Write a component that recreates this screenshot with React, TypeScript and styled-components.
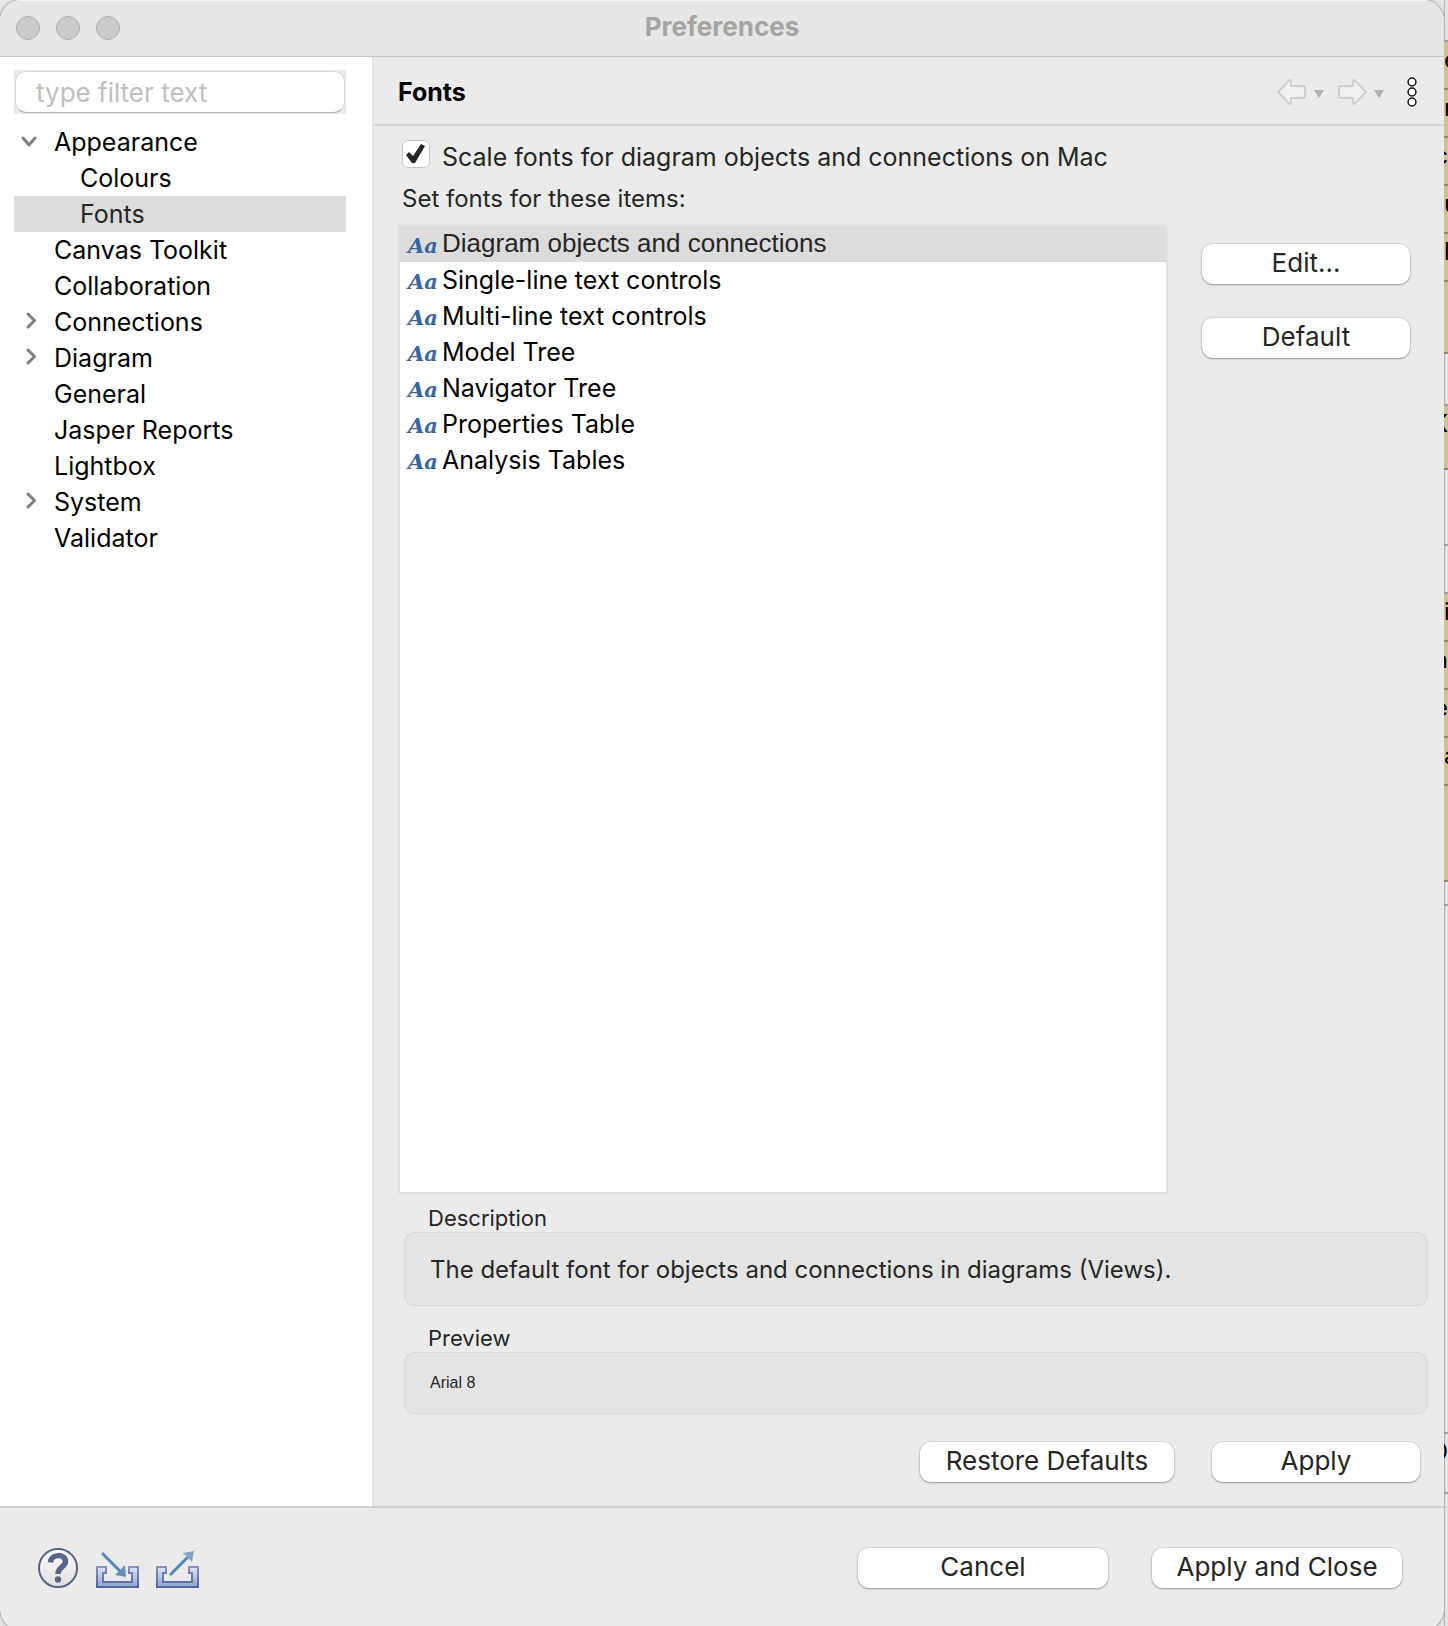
import React, { useState } from "react";
import styled, { createGlobalStyle } from "styled-components";

const sans = `Inter, "Liberation Sans", sans-serif`;
const arial = `"Liberation Sans", Arial, sans-serif`;

const GlobalStyle = createGlobalStyle`
  *, *::before, *::after { box-sizing: border-box; }
  body { margin: 0; font-family: ${sans}; background: #ebebeb; color: #262626; }
  button, input { font: inherit; color: inherit; }
  ul, h1, h2, h3, p { margin: 0; padding: 0; font-weight: inherit; font-size: inherit; }
  ul { list-style: none; }
`;

const Desktop = styled.div`
  display: grid;
  grid-template-columns: minmax(0, 1fr) 4px;
  height: 100vh;
  min-height: 900px;
  overflow: hidden;
  background: #ededed;
`;

const Dialog = styled.main`
  display: flex;
  flex-direction: column;
  margin-bottom: -6px;
  border-radius: 21px 21px 24px 24px;
  overflow: hidden;
  background: #ebebeb;
  box-shadow: 0 0 0 1px #b4b4b4, 0 0 8px rgba(0, 0, 0, 0.25);
`;

const TitleBar = styled.header`
  display: grid;
  grid-template-columns: 1fr auto 1fr;
  align-items: center;
  height: 57px;
  padding: 0 16px;
  background: #e6e6e4;
  border-bottom: 1px solid #c6c6c6;
  box-shadow: inset 0 1px #f6f6f6;
`;

const Lights = styled.div`
  display: flex;
  gap: 16px;
`;

const Light = styled.button`
  width: 24px;
  height: 24px;
  padding: 0;
  border: 1px solid #adadac;
  border-radius: 50%;
  background: #cbcbca;
`;

const Title = styled.h1`
  font-size: 26px;
  line-height: 36px;
  font-weight: 700;
  color: #a5a5a4;
  padding-bottom: 2px;
`;

const Body = styled.div`
  display: grid;
  grid-template-columns: 374px minmax(0, 1fr);
  flex: 1;
  min-height: 0;
`;

const Sidebar = styled.nav`
  padding: 13px 26px 0 14px;
  background: #fff;
  border-right: 2px solid #e5e5e5;
`;

const FilterFrame = styled.label`
  display: block;
  height: 44px;
  padding: 1px;
  background: #ebebeb;
`;

const Filter = styled.input`
  display: block;
  width: 100%;
  height: 42px;
  padding: 1px 20px 0;
  border: 1px solid #dadada;
  border-bottom-color: #b0b0b0;
  border-radius: 11px;
  background: #fff;
  font-size: 26px;
  outline: none;
  &::placeholder { color: #c0c0c0; opacity: 1; }
`;

const Tree = styled.ul`
  margin-top: 10px;
`;

const TreeRow = styled.li<{ $child?: boolean; $selected?: boolean }>`
  display: flex;
  align-items: center;
  height: 36px;
  padding-left: ${(p) => (p.$child ? "32px" : "6px")};
  background: ${(p) => (p.$selected ? "#dcdcdc" : "transparent")};
  color: ${(p) => (p.$selected ? "#262626" : "#000")};
  font-size: 25px;
  line-height: 36px;
  cursor: default;
`;

const Twisty = styled.span`
  display: flex;
  width: 34px;
  flex: none;
  svg { display: block; }
`;

const Page = styled.section`
  display: flex;
  flex-direction: column;
  min-width: 0;
`;

const PageHeader = styled.header`
  display: flex;
  align-items: center;
  justify-content: space-between;
  height: 69px;
  padding: 2px 27px 0 24px;
  border-bottom: 2px solid #d4d4d4;
`;

const PageTitle = styled.h2`
  font-size: 25px;
  line-height: 36px;
  font-weight: 700;
  color: #000;
`;

const Toolbar = styled.div`
  display: flex;
  align-items: center;
`;

const ToolButton = styled.button<{ $gap?: number }>`
  display: flex;
  padding: 0;
  margin-left: ${(p) => p.$gap ?? 0}px;
  border: 0;
  background: none;
`;

const PageContent = styled.div`
  display: flex;
  flex-direction: column;
  flex: 1;
  min-height: 0;
  padding: 13px 16px 24px 24px;
`;

const CheckRow = styled.label`
  display: flex;
  align-items: flex-start;
  gap: 12px;
  padding-left: 4px;
  font-size: 25px;
  line-height: 36px;
`;

const Check = styled.input`
  appearance: none;
  width: 28px;
  height: 28px;
  margin: 1px 0 0;
  border: 1px solid #c4c4c4;
  border-radius: 6px;
  background: #fff;
  display: grid;
  place-items: center;
  &:checked::before {
    content: "";
    width: 20px;
    height: 20px;
    background: #262626;
    clip-path: path("M0 11 L3 8 L7 12 L15 0 L19 2 L9 19 L6 19 Z");
  }
`;

const ListCaption = styled.p`
  margin: 10px 0 11px;
  padding-left: 4px;
  font-size: 24px;
  line-height: 28px;
`;

const Split = styled.div`
  display: grid;
  grid-template-columns: minmax(0, 1fr) 208px;
  gap: 34px;
  flex: 1;
  min-height: 0;
  padding-right: 18px;
`;

const FontList = styled.ul`
  border: 2px solid #e2e2e2;
  background: #fff;
`;

const FontRow = styled.li<{ $selected?: boolean }>`
  display: flex;
  gap: 4px;
  height: 36px;
  padding-left: 8px;
  background: ${(p) => (p.$selected ? "#dcdcdc" : "transparent")};
  color: ${(p) => (p.$selected ? "#262626" : "#000")};
  font-family: ${(p) => (p.$selected ? arial : sans)};
  font-size: ${(p) => (p.$selected ? 26 : 25)}px;
  line-height: ${(p) => (p.$selected ? 34 : 36)}px;
  cursor: default;
`;

const FontMark = styled.span`
  width: 30px;
  flex: none;
  color: #3a659e;
  font-family: "DejaVu Serif", "Liberation Serif", serif;
  font-size: 21px;
  line-height: 40px;
  font-weight: 700;
  font-style: italic;
`;

const SideButtons = styled.div`
  display: flex;
  flex-direction: column;
  gap: 34px;
  padding-top: 20px;
`;

const PushButton = styled.button<{ $width?: number }>`
  width: ${(p) => (p.$width ? `${p.$width}px` : "auto")};
  height: 40px;
  padding: 0 0 2px;
  border: 0;
  border-radius: 11px;
  background: #fff;
  box-shadow: 0 0 1px 1px rgba(0, 0, 0, 0.08), 0 1px 2px rgba(0, 0, 0, 0.3);
  font-size: 26px;
  line-height: 36px;
`;

const Group = styled.section`
  padding-left: 6px;
  & + & { margin-top: 8px; }
`;

const GroupTitle = styled.h3`
  padding: 10px 0 0 24px;
  font-size: 22px;
  line-height: 28px;
`;

const GroupBox = styled.div<{ $height: number }>`
  display: flex;
  align-items: center;
  height: ${(p) => p.$height}px;
  padding-left: 25px;
  border: 1px solid #dadada;
  border-radius: 10px;
  background: #e4e4e4;
`;

const DescriptionText = styled.p`
  padding-top: 1px;
  font-size: 24px;
  line-height: 28px;
`;

const PreviewText = styled.p`
  font-family: ${arial};
  font-size: 16px;
  line-height: 20px;
`;

const PageActions = styled.div`
  display: flex;
  justify-content: flex-end;
  gap: 38px;
  margin-top: 28px;
  padding-right: 8px;
`;

const Footer = styled.footer`
  display: flex;
  justify-content: space-between;
  align-items: center;
  height: 126px;
  padding: 0 42px 4px 38px;
  border-top: 2px solid #d2d2d2;
`;

const FooterTools = styled.div`
  display: flex;
  gap: 17px;
`;

const FooterActions = styled.div`
  display: flex;
  gap: 44px;
`;

const Behind = styled.aside`
  display: flex;
  flex-direction: column;
  overflow: hidden;
  background: #e3e3e3;
  box-shadow: inset 1px 0 #b0b0b0;
`;

const BehindCell = styled.div<{ $height: number; $tan?: boolean; $side?: "end" }>`
  display: flex;
  flex: none;
  align-items: flex-start;
  justify-content: ${(p) => (p.$side === "end" ? "flex-end" : "flex-start")};
  height: ${(p) => p.$height}px;
  padding-top: 3px;
  overflow: hidden;
  color: #000;
  background: ${(p) => (p.$tan ? "#d3c091" : "transparent")};
  border-bottom: 2px solid ${(p) => (p.$tan ? "#988a66" : "#a2a2a2")};
  font-size: 24px;
  line-height: 30px;
`;

const treeItems: { label: string; child?: boolean; state?: "open" | "closed" }[] = [
  { label: "Appearance", state: "open" },
  { label: "Colours", child: true },
  { label: "Fonts", child: true },
  { label: "Canvas Toolkit" },
  { label: "Collaboration" },
  { label: "Connections", state: "closed" },
  { label: "Diagram", state: "closed" },
  { label: "General" },
  { label: "Jasper Reports" },
  { label: "Lightbox" },
  { label: "System", state: "closed" },
  { label: "Validator" },
];

const fontItems = [
  "Diagram objects and connections",
  "Single-line text controls",
  "Multi-line text controls",
  "Model Tree",
  "Navigator Tree",
  "Properties Table",
  "Analysis Tables",
];

const behindCells: { height: number; tan?: boolean; text?: string; side?: "end" }[] = [
  { height: 42 },
  { height: 48, tan: true, text: "e" },
  { height: 48, tan: true, text: "r" },
  { height: 48, tan: true, text: "c", side: "end" },
  { height: 48, tan: true, text: "u" },
  { height: 48, tan: true, text: "ll" },
  { height: 72, tan: true },
  { height: 52 },
  { height: 64, tan: true, text: "K", side: "end" },
  { height: 76 },
  { height: 48 },
  { height: 48, tan: true, text: "i" },
  { height: 48, tan: true, text: "n", side: "end" },
  { height: 48, tan: true, text: "e", side: "end" },
  { height: 48, tan: true, text: "a" },
  { height: 96, tan: true },
  { height: 24 },
  { height: 528 },
  { height: 60, text: "D", side: "end" },
];

const ChevronDown = () => (
  <svg width="18" height="12" viewBox="0 0 18 12" fill="none" stroke="#808080" strokeWidth="3" strokeLinecap="round" strokeLinejoin="round">
    <path d="M3 2 L9 9 L15 2" />
  </svg>
);

const ChevronRight = () => (
  <svg width="30" height="20" viewBox="0 0 30 20" fill="none" stroke="#808080" strokeWidth="3" strokeLinecap="round" strokeLinejoin="round">
    <path d="M8 2 L14.500 8.500 L8 15" />
  </svg>
);

const ArrowIcon = ({ flip }: { flip?: boolean }) => (
  <svg width="30" height="26" viewBox="0 0 30 26">
    <path
      transform={flip ? "translate(30 0) scale(-1 1)" : undefined}
      d="M2 13 L13 1.500 H15 V7 H28 L29 8.500 V17.500 L28 19 H15 V24.500 H13 Z"
      fill="#f0f0f0"
      stroke="#d0d0d0"
      strokeWidth="2"
    />
  </svg>
);

const Triangle = () => (
  <svg width="10" height="12" viewBox="0 0 10 12">
    <path d="M0 4 H10 L5 12 Z" fill="#b0b0b0" />
  </svg>
);

const DotsIcon = () => (
  <svg width="10" height="30" viewBox="0 0 10 30" fill="#fff" stroke="#1a1a1a" strokeWidth="1.5">
    <circle cx="5" cy="5" r="3.900" />
    <circle cx="5" cy="15" r="3.900" />
    <circle cx="5" cy="25" r="3.900" />
  </svg>
);

const HelpIcon = () => (
  <svg width="41" height="40" viewBox="0 0 41 40">
    <defs>
      <linearGradient id="help" x1="0" y1="0" x2="0" y2="1">
        <stop offset="0" stopColor="#fff" />
        <stop offset="1" stopColor="#dedede" />
      </linearGradient>
    </defs>
    <circle cx="20" cy="20" r="19" fill="url(#help)" stroke="#56658a" strokeWidth="2" />
    <path d="M12.500 14.500 C13 5.500 27.500 5.500 27.500 13.500 C27.500 19 20 19 20 26" fill="none" stroke="#56658a" strokeWidth="5.500" />
    <circle cx="20" cy="31.500" r="3.200" fill="#56658a" />
  </svg>
);

const TrayIcon = ({ out }: { out?: boolean }) => (
  <svg width="43" height="40" viewBox="0 0 43 40">
    <defs>
      <linearGradient id="tray" x1="0" y1="0" x2="0" y2="1">
        <stop offset="0" stopColor="#dfe5f3" />
        <stop offset="1" stopColor="#8fa3cf" />
      </linearGradient>
      <linearGradient id="rim" x1="0" y1="0" x2="0" y2="1">
        <stop offset="0" stopColor="#8593bb" />
        <stop offset="1" stopColor="#4f659f" />
      </linearGradient>
    </defs>
    <path
      d="M1 19 H10 V25 H7 V34 H36 V25 H33 V19 H42 V39 H1 Z"
      fill="url(#tray)"
      stroke="url(#rim)"
      strokeWidth="2"
    />
    {out ? (
      <>
        <path d="M14 27 L32 9" stroke="#5288bd" strokeWidth="3" />
        <path d="M27 5 L38 3 L36 14 Z" fill="#84a5bf" />
      </>
    ) : (
      <>
        <path d="M6 5 L25 24" stroke="#5288bd" strokeWidth="3" />
        <path d="M29 17 L30 29 L19 27 Z" fill="#6690b4" />
      </>
    )}
  </svg>
);

export default function App() {
  const [scale, setScale] = useState(true);
  const [filter, setFilter] = useState("");

  return (
    <>
      <GlobalStyle />
      <Desktop>
        <Dialog>
          <TitleBar>
            <Lights>
              <Light aria-label="Close" />
              <Light aria-label="Minimise" />
              <Light aria-label="Zoom" />
            </Lights>
            <Title>Preferences</Title>
          </TitleBar>
          <Body>
            <Sidebar>
              <FilterFrame>
                <Filter
                  aria-label="Filter"
                  placeholder="type filter text"
                  value={filter}
                  onChange={(e) => setFilter(e.target.value)}
                />
              </FilterFrame>
              <Tree role="tree">
                {treeItems.map((item) => (
                  <TreeRow
                    key={item.label}
                    role="treeitem"
                    aria-selected={item.label === "Fonts"}
                    $child={item.child}
                    $selected={item.label === "Fonts"}
                  >
                    <Twisty>
                      {item.state === "open" && <ChevronDown />}
                      {item.state === "closed" && <ChevronRight />}
                    </Twisty>
                    {item.label}
                  </TreeRow>
                ))}
              </Tree>
            </Sidebar>
            <Page>
              <PageHeader>
                <PageTitle>Fonts</PageTitle>
                <Toolbar>
                  <ToolButton aria-label="Back"><ArrowIcon /></ToolButton>
                  <ToolButton aria-label="Back history" $gap={8}><Triangle /></ToolButton>
                  <ToolButton aria-label="Forward" $gap={14}><ArrowIcon flip /></ToolButton>
                  <ToolButton aria-label="Forward history" $gap={6}><Triangle /></ToolButton>
                  <ToolButton aria-label="Menu" $gap={23}><DotsIcon /></ToolButton>
                </Toolbar>
              </PageHeader>
              <PageContent>
                <CheckRow>
                  <Check type="checkbox" checked={scale} onChange={(e) => setScale(e.target.checked)} />
                  Scale fonts for diagram objects and connections on Mac
                </CheckRow>
                <ListCaption>Set fonts for these items:</ListCaption>
                <Split>
                  <FontList role="listbox" aria-label="Fonts">
                    {fontItems.map((name, i) => (
                      <FontRow key={name} role="option" aria-selected={i === 0} $selected={i === 0}>
                        <FontMark aria-hidden="true">Aa</FontMark>
                        {name}
                      </FontRow>
                    ))}
                  </FontList>
                  <SideButtons>
                    <PushButton>Edit...</PushButton>
                    <PushButton>Default</PushButton>
                  </SideButtons>
                </Split>
                <Group>
                  <GroupTitle>Description</GroupTitle>
                  <GroupBox $height={74}>
                    <DescriptionText>The default font for objects and connections in diagrams (Views).</DescriptionText>
                  </GroupBox>
                </Group>
                <Group>
                  <GroupTitle>Preview</GroupTitle>
                  <GroupBox $height={62}>
                    <PreviewText>Arial 8</PreviewText>
                  </GroupBox>
                </Group>
                <PageActions>
                  <PushButton $width={254}>Restore Defaults</PushButton>
                  <PushButton $width={208}>Apply</PushButton>
                </PageActions>
              </PageContent>
            </Page>
          </Body>
          <Footer>
            <FooterTools>
              <ToolButton aria-label="Help"><HelpIcon /></ToolButton>
              <ToolButton aria-label="Import preferences"><TrayIcon /></ToolButton>
              <ToolButton aria-label="Export preferences"><TrayIcon out /></ToolButton>
            </FooterTools>
            <FooterActions>
              <PushButton $width={250}>Cancel</PushButton>
              <PushButton $width={250}>Apply and Close</PushButton>
            </FooterActions>
          </Footer>
        </Dialog>
        <Behind aria-hidden="true">
          {behindCells.map((cell, i) => (
            <BehindCell key={i} $height={cell.height} $tan={cell.tan} $side={cell.side}>
              {cell.text}
            </BehindCell>
          ))}
        </Behind>
      </Desktop>
    </>
  );
}
